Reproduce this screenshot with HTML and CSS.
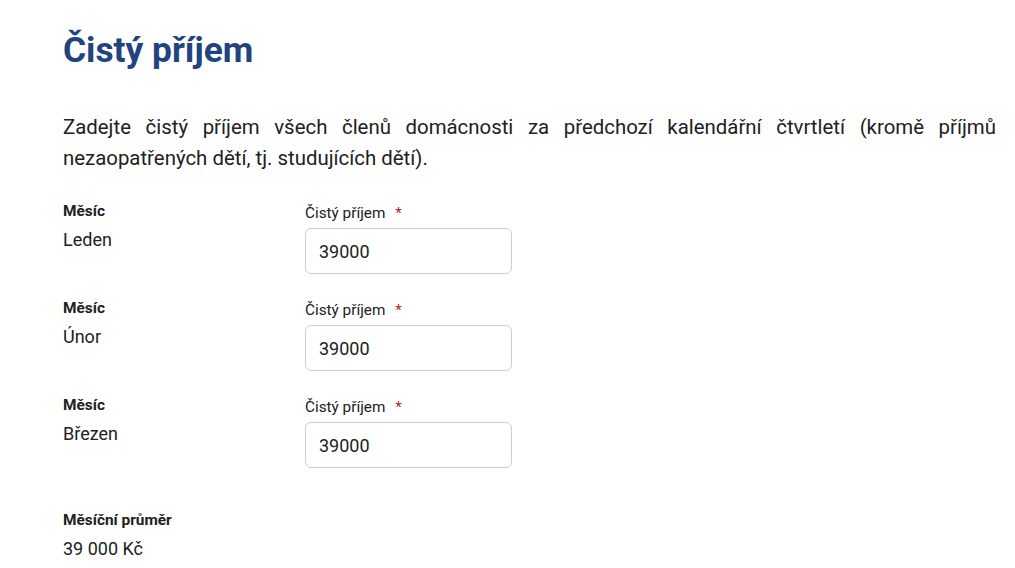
FILE: index.html
```html
<!DOCTYPE html>
<html>
    <head>
        <title>Čistý příjem</title>
        <meta charset="UTF-8">
        <link rel="stylesheet" href="styles.css">
    </head>
    <body>
        <div class='page'>
            <h1 class='title'>Čistý příjem</h1>
            <p class='intro'>Zadejte čistý příjem všech členů domácnosti za předchozí kalendářní čtvrtletí (kromě příjmů nezaopatřených dětí, tj. studujících dětí).</p>

            <div class='row'>
                <div class='month'>
                    <div class='label'>Měsíc</div>
                    <div class='value'>Leden</div>
                </div>
                <div class='field'>
                    <label class='field_label'>Čistý příjem <span class='req'>*</span></label>
                    <input class='field_input' type='text' value='39000'>
                </div>
            </div>

            <div class='row'>
                <div class='month'>
                    <div class='label'>Měsíc</div>
                    <div class='value'>Únor</div>
                </div>
                <div class='field'>
                    <label class='field_label'>Čistý příjem <span class='req'>*</span></label>
                    <input class='field_input' type='text' value='39000'>
                </div>
            </div>

            <div class='row'>
                <div class='month'>
                    <div class='label'>Měsíc</div>
                    <div class='value'>Březen</div>
                </div>
                <div class='field'>
                    <label class='field_label'>Čistý příjem <span class='req'>*</span></label>
                    <input class='field_input' type='text' value='39000'>
                </div>
            </div>

            <div class='summary'>
                <div class='label'>Měsíční průměr</div>
                <div class='sum_value'>39 000 Kč</div>
            </div>
        </div>
    </body>
</html>
```

FILE: styles.css
```css
body {
    margin: 0;
    font-family: Roboto, "Noto Sans", sans-serif;
    color: #212121;
    background: #fff;
}
.page {
    padding: 0 19px 0 63px;
}
.title {
    margin: 0;
    padding-top: 28px;
    font-size: 35.3px;
    line-height: 44px;
    font-weight: 700;
    color: #21437f;
}
.intro {
    margin: 40px 0 0 0;
    font-size: 20.4px;
    line-height: 31px;
    text-align: justify;
}
.row {
    display: flex;
    margin-top: 27px;
    height: 80px;
}
.row + .row {
    margin-top: 17px;
}
.month {
    width: 242px;
}
.label {
    font-size: 15.4px;
    font-weight: 700;
    line-height: 20px;
}
.value {
    font-size: 18px;
    line-height: 26px;
    margin-top: 6px;
}
.field {
    display: flex;
    flex-direction: column;
}
.field_label {
    font-size: 15.3px;
    line-height: 20px;
    margin-top: 2px;
}
.req {
    color: #b3262b;
    margin-left: 6px;
}
.field_input {
    box-sizing: border-box;
    width: 207px;
    height: 46px;
    margin-top: 5px;
    padding: 0 13px;
    border: 1px solid #cfcfcf;
    border-radius: 6px;
    font-family: Roboto, "Noto Sans", sans-serif;
    font-size: 18px;
    color: #212121;
}
.summary {
    margin-top: 35px;
}
.sum_value {
    font-size: 18px;
    line-height: 26px;
    margin-top: 6px;
}
```
